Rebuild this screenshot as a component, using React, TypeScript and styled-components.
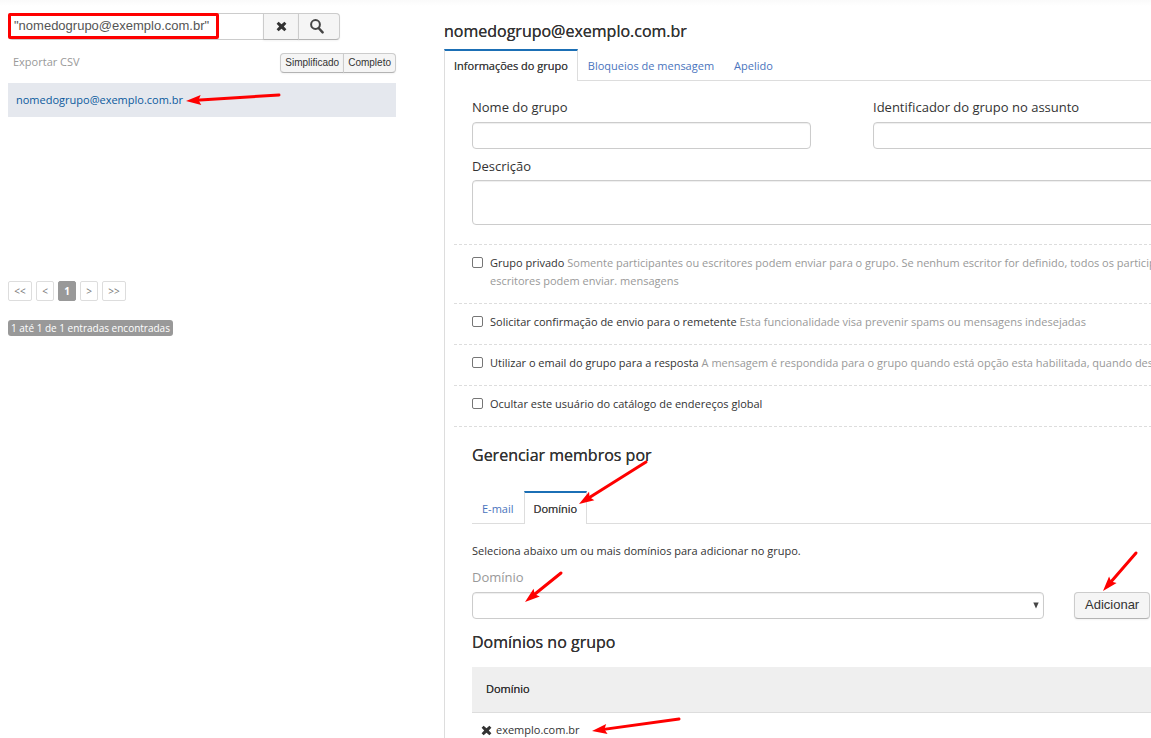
import React from "react";
import styled, { createGlobalStyle, css } from "styled-components";

const colors = {
  text: "#333",
  muted: "#999",
  link: "#0b5a9d",
  tabLink: "#4a74bd",
  accent: "#1b6fb5",
  line: "#ddd",
  field: "#ccc",
  mark: "#fe0000",
};

const uiFont = `"Liberation Sans", Arial, sans-serif`;

const GlobalStyle = createGlobalStyle`
  * { box-sizing: border-box; }
  body {
    margin: 0;
    background: #fff;
    color: ${colors.text};
    font: 11px/18px "Open Sans", sans-serif;
    overflow: hidden;
  }
  h1, h2, p, ul { margin: 0; padding: 0; }
  a { text-decoration: none; }
`;

const Page = styled.div`
  position: relative;
  display: grid;
  grid-template-columns: minmax(0, 388fr) minmax(0, 707fr);
  column-gap: 48px;
  height: 100vh;
  padding-left: 8px;
  overflow: hidden;
  background: linear-gradient(#fafafa, #fff 6px);
`;

const Sidebar = styled.aside`
  padding-top: 13px;
`;

/* Slightly heavier than regular, without the width of the semibold cut. */
const emphasis = css`
  font-weight: 400;
  text-shadow: 0 0 0 currentColor;
`;

const controlFace = css`
  border: 1px solid ${colors.field};
  border-bottom-color: #b3b3b3;
  background: #f5f5f5;
  color: ${colors.text};
  font-family: ${uiFont};
  box-shadow: 0 1px 2px rgba(0, 0, 0, 0.05);
`;

const SearchBar = styled.form`
  position: relative;
  display: flex;
  width: 332px;
  height: 27px;
`;

const SearchInput = styled.input`
  flex: 1;
  min-width: 0;
  padding: 0 5px 2px;
  border: 1px solid ${colors.field};
  border-radius: 4px 0 0 4px;
  color: #555;
  font: 13px/18px ${uiFont};
`;

const SearchButton = styled.button<{ $wide?: boolean }>`
  ${controlFace}
  display: flex;
  align-items: center;
  justify-content: center;
  width: ${(p) => (p.$wide ? 42 : 36)}px;
  margin-left: -1px;
  padding: 0 ${(p) => (p.$wide ? 4 : 0)}px 0 0;
  &:last-of-type {
    border-radius: 0 4px 4px 0;
  }
`;

const Highlight = styled.span`
  position: absolute;
  top: 0;
  left: 0;
  width: 211px;
  height: 26px;
  border: 3px solid ${colors.mark};
  border-radius: 2px;
  pointer-events: none;
`;

const ExportRow = styled.div`
  display: flex;
  align-items: flex-start;
  justify-content: space-between;
  margin: 13px 0 10px;
  padding-left: 5px;
  color: ${colors.muted};
`;

const ButtonGroup = styled.div`
  display: flex;
`;

const SmallButton = styled.button`
  ${controlFace}
  height: 20px;
  padding: 0 4px;
  font-size: 10px;
  line-height: 18px;
  &:first-child {
    border-radius: 4px 0 0 4px;
  }
  &:last-child {
    margin-left: -1px;
    border-radius: 0 4px 4px 0;
  }
`;

const ResultList = styled.ul`
  min-height: 198px;
  list-style: none;
`;

const ResultItem = styled.li`
  padding: 8px;
  background: #e5e8ee;
  a {
    color: ${colors.link};
  }
`;

const Pager = styled.nav`
  display: flex;
  gap: 4px;
`;

const PageButton = styled.button<{ $active?: boolean; $wide?: boolean }>`
  width: ${(p) => (p.$wide ? 24 : 18)}px;
  height: 20px;
  padding: 0;
  border: 1px solid ${(p) => (p.$active ? "#999" : colors.line)};
  border-radius: 2px;
  background: ${(p) => (p.$active ? "#999" : "#fff")};
  color: ${(p) => (p.$active ? "#fff" : "#777")};
  font: ${(p) => (p.$active ? 700 : 400)} 10px/18px "Open Sans", sans-serif;
`;

const CountBadge = styled.span`
  display: inline-block;
  margin-top: 19px;
  padding: 0 3px;
  border-radius: 3px;
  background: #999;
  color: #fff;
  font-size: 10px;
  line-height: 16px;
`;

const Main = styled.main`
  min-width: 0;
  padding-top: 20px;
`;

const Heading = styled.h2`
  ${emphasis}
  font-size: 16px;
  line-height: 22px;
`;

const TabBar = styled.div`
  display: flex;
  border-bottom: 1px solid ${colors.line};
`;

const Tab = styled.button<{ $active?: boolean }>`
  height: 32px;
  margin-bottom: -1px;
  padding: 0 9px;
  border: 1px solid transparent;
  border-top: 2px solid transparent;
  border-bottom: 0;
  background: transparent;
  color: ${colors.tabLink};
  font: 11px/18px "Open Sans", sans-serif;
  ${(p) =>
    p.$active &&
    css`
      ${emphasis}
      border-color: ${colors.accent} ${colors.line} transparent;
      background: #fff;
      color: #444;
    `}
`;

const MainTabs = styled(TabBar)`
  margin-top: 7px;
`;

const MemberTabs = styled(TabBar)`
  margin-top: 25px;
  ${Tab} {
    height: 33px;
  }
`;

const Panel = styled.section`
  height: 100%;
  padding: 16px 0 0 9px;
  border-left: 1px solid ${colors.line};
  overflow: hidden;
`;

const Block = styled.div`
  min-width: 758px;
  padding-left: 18px;
`;

const FieldRow = styled.div`
  display: grid;
  grid-template-columns: 1fr 1fr;
  column-gap: 62px;
`;

const Label = styled.label<{ $muted?: boolean }>`
  display: block;
  color: ${(p) => (p.$muted ? colors.muted : colors.text)};
  font-size: 13px;
  line-height: 20px;
`;

const fieldFace = css`
  display: block;
  width: 100%;
  border: 1px solid ${colors.field};
  border-radius: 4px;
  background: #fff;
  box-shadow: inset 0 1px 1px rgba(0, 0, 0, 0.07);
  font: 13px/18px ${uiFont};
`;

const TextInput = styled.input`
  ${fieldFace}
  height: 27px;
  margin: 5px 0 7px;
`;

const TextArea = styled.textarea`
  ${fieldFace}
  height: 45px;
  margin: 4px 0 19px;
  resize: none;
`;

const Option = styled.label`
  display: flex;
  align-items: flex-start;
  gap: 7px;
  min-width: 758px;
  padding: 9px 0 13px 18px;
  border-top: 1px dashed ${colors.line};
  white-space: nowrap;
`;

const Checkbox = styled.input`
  appearance: none;
  width: 11px;
  height: 11px;
  margin: 3px 0 0;
  border: 1px solid #767676;
  border-radius: 2px;
  background: #fff;
`;

const Hint = styled.span`
  color: ${colors.muted};
`;

const Members = styled(Block)`
  border-top: 1px dashed ${colors.line};
  padding-top: 17px;
  margin-left: 0;
`;

const Note = styled.p`
  margin: 18px 0 7px;
`;

const AddRow = styled.div`
  display: grid;
  grid-template-columns: 572fr 138fr;
  column-gap: 30px;
  margin: 5px 0 12px;
`;

const SelectWrap = styled.div`
  position: relative;
  svg {
    position: absolute;
    top: 10px;
    right: 5px;
    pointer-events: none;
  }
`;

const Select = styled.select`
  ${fieldFace}
  appearance: none;
  height: 27px;
`;

const AddButton = styled.button`
  ${controlFace}
  justify-self: start;
  height: 27px;
  padding: 0 10px 2px;
  border-radius: 4px;
  font-size: 13px;
`;

const DomainTable = styled.table`
  width: 100%;
  margin-top: 14px;
  border-collapse: collapse;
  th {
    ${emphasis}
    height: 45px;
    padding: 0 14px;
    border-bottom: 1px solid ${colors.line};
    background: #efefef;
    text-align: left;
  }
  td {
    height: 36px;
    padding: 0 9px;
  }
`;

const DomainCell = styled.div`
  display: flex;
  align-items: center;
  gap: 4px;
`;

const IconButton = styled.button`
  display: flex;
  padding: 0;
  border: 0;
  background: none;
`;

const Overlay = styled.svg`
  position: absolute;
  top: 0;
  left: 0;
  pointer-events: none;
`;

const CrossIcon = () => (
  <svg width="11" height="11" viewBox="0 0 11 11" aria-hidden="true">
    <path
      d="M2.6.8 5.5 3.3 8.4.8l2 2L7.8 5.5l2.6 2.7-2 2L5.5 7.7 2.6 10.2l-2-2L3.2 5.5.6 2.8z"
      fill="#333"
    />
  </svg>
);

const SearchIcon = () => (
  <svg width="14" height="15" viewBox="0 0 14 15" aria-hidden="true">
    <circle cx="5.500" cy="5.500" r="4.400" fill="none" stroke="#444" strokeWidth="2" />
    <path d="M8.800 9.200 12.600 13.400" stroke="#444" strokeWidth="2.400" strokeLinecap="round" />
  </svg>
);

const CaretIcon = () => (
  <svg width="6" height="7" viewBox="0 0 6 7" aria-hidden="true">
    <path d="M.3.5h5.400L3 6.500z" fill="#444" />
  </svg>
);

type ArrowProps = { from: [number, number]; to: [number, number] };

/* A straight pointer: a thick shaft with a swept-back head at its end. */
const Arrow = ({ from, to }: ArrowProps) => {
  const dx = to[0] - from[0];
  const dy = to[1] - from[1];
  const length = Math.hypot(dx, dy);
  const angle = (Math.atan2(dy, dx) * 180) / Math.PI;
  return (
    <g transform={`translate(${to[0]} ${to[1]}) rotate(${angle})`}>
      <path d={`M${-length} 0H-10`} stroke={colors.mark} strokeWidth="3" strokeLinecap="round" />
      <path d="M0 0-15-5-12.500 0-15 5z" fill={colors.mark} />
    </g>
  );
};

const arrows: ArrowProps[] = [
  { from: [279, 95], to: [186, 101] },
  { from: [646, 462], to: [579, 504] },
  { from: [561, 573], to: [525, 602] },
  { from: [1136, 553], to: [1103, 591] },
  { from: [679, 719], to: [592, 731] },
];

type OptionData = { name: string; title: string; hint?: React.ReactNode };

const options: OptionData[] = [
  {
    name: "private",
    title: "Grupo privado",
    hint: (
      <>
        Somente participantes ou escritores podem enviar para o grupo. Se nenhum escritor for
        definido, todos os participantes e
        <br />
        escritores podem enviar. mensagens
      </>
    ),
  },
  {
    name: "confirm",
    title: "Solicitar confirmação de envio para o remetente",
    hint: "Esta funcionalidade visa prevenir spams ou mensagens indesejadas",
  },
  {
    name: "reply",
    title: "Utilizar o email do grupo para a resposta",
    hint: "A mensagem é respondida para o grupo quando está opção esta habilitada, quando desabilitada",
  },
  { name: "hide", title: "Ocultar este usuário do catálogo de endereços global" },
];

export default function App() {
  return (
    <>
      <GlobalStyle />
      <Page>
        <Sidebar>
          <SearchBar onSubmit={(e) => e.preventDefault()}>
            <SearchInput aria-label="Buscar" defaultValue={'"nomedogrupo@exemplo.com.br"'} />
            <SearchButton type="button" aria-label="Limpar">
              <CrossIcon />
            </SearchButton>
            <SearchButton type="submit" aria-label="Pesquisar" $wide>
              <SearchIcon />
            </SearchButton>
            <Highlight />
          </SearchBar>
          <ExportRow>
            <span>Exportar CSV</span>
            <ButtonGroup>
              <SmallButton type="button">Simplificado</SmallButton>
              <SmallButton type="button">Completo</SmallButton>
            </ButtonGroup>
          </ExportRow>
          <ResultList>
            <ResultItem>
              <a href="#grupo">nomedogrupo@exemplo.com.br</a>
            </ResultItem>
          </ResultList>
          <Pager>
            <PageButton $wide>&lt;&lt;</PageButton>
            <PageButton>&lt;</PageButton>
            <PageButton $active>1</PageButton>
            <PageButton>&gt;</PageButton>
            <PageButton $wide>&gt;&gt;</PageButton>
          </Pager>
          <CountBadge>1 até 1 de 1 entradas encontradas</CountBadge>
        </Sidebar>

        <Main>
          <Heading as="h1">nomedogrupo@exemplo.com.br</Heading>
          <MainTabs>
            <Tab $active>Informações do grupo</Tab>
            <Tab>Bloqueios de mensagem</Tab>
            <Tab>Apelido</Tab>
          </MainTabs>
          <Panel>
            <Block>
              <FieldRow>
                <div>
                  <Label htmlFor="name">Nome do grupo</Label>
                  <TextInput id="name" />
                </div>
                <div>
                  <Label htmlFor="subject">Identificador do grupo no assunto</Label>
                  <TextInput id="subject" />
                </div>
              </FieldRow>
              <Label htmlFor="description">Descrição</Label>
              <TextArea id="description" />
            </Block>
            {options.map((o) => (
              <Option key={o.name}>
                <Checkbox type="checkbox" name={o.name} />
                <span>
                  {o.title} {o.hint && <Hint>{o.hint}</Hint>}
                </span>
              </Option>
            ))}
            <Members>
              <Heading>Gerenciar membros por</Heading>
              <MemberTabs>
                <Tab>E-mail</Tab>
                <Tab $active>Domínio</Tab>
              </MemberTabs>
              <Note>Seleciona abaixo um ou mais domínios para adicionar no grupo.</Note>
              <Label htmlFor="domain" $muted>
                Domínio
              </Label>
              <AddRow>
                <SelectWrap>
                  <Select id="domain" />
                  <CaretIcon />
                </SelectWrap>
                <AddButton type="button">Adicionar</AddButton>
              </AddRow>
              <Heading>Domínios no grupo</Heading>
              <DomainTable>
                <thead>
                  <tr>
                    <th scope="col">Domínio</th>
                  </tr>
                </thead>
                <tbody>
                  <tr>
                    <td>
                      <DomainCell>
                        <IconButton type="button" aria-label="Remover">
                          <CrossIcon />
                        </IconButton>
                        exemplo.com.br
                      </DomainCell>
                    </td>
                  </tr>
                </tbody>
              </DomainTable>
            </Members>
          </Panel>
        </Main>

        <Overlay width="1151" height="738" aria-hidden="true">
          {arrows.map((a) => (
            <Arrow key={a.to.join()} {...a} />
          ))}
        </Overlay>
      </Page>
    </>
  );
}
